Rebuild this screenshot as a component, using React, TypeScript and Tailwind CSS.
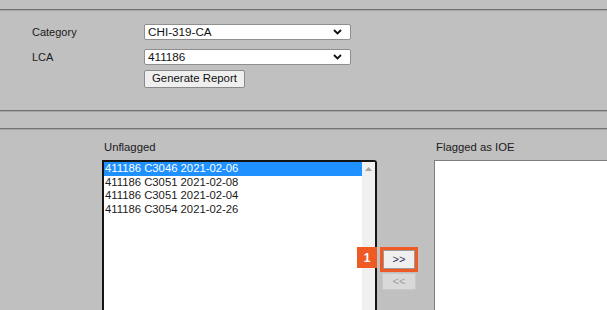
import React from "react";

const rows = [
  "411186 C3046 2021-02-06",
  "411186 C3051 2021-02-08",
  "411186 C3051 2021-02-04",
  "411186 C3054 2021-02-26",
];

function Chevron() {
  return (
    <svg width="9" height="6" viewBox="0 0 9 6" className="shrink-0">
      <path d="M1 1 L4.5 4.5 L8 1" fill="none" stroke="#111" strokeWidth="1.8" />
    </svg>
  );
}

function FakeSelect({ value }: { value: string }) {
  return (
    <div className="flex h-[16px] w-[207px] items-center justify-between rounded-[2px] border border-[#8f8f8f] bg-white pl-[3px] pr-[8px] text-[11.7px] leading-none text-[#111]">
      <span>{value}</span>
      <Chevron />
    </div>
  );
}

function Rule() {
  return (
    <div className="flex flex-col">
      <div className="h-px bg-[#737373]" />
      <div className="h-px bg-[#a5a5a5]" />
    </div>
  );
}

export default function App() {
  return (
    <div className="relative h-[310px] w-[607px] overflow-hidden bg-[#c0c0c0] font-['Liberation_Sans',Arial,sans-serif] text-[#1a1a1a]">
      <div className="h-[9px]" />
      <Rule />

      {/* report form */}
      <div className="grid h-[99px] grid-cols-[112px_auto] content-start gap-x-0 pl-[32px] pt-[13px]">
        <div className="flex h-[16px] items-center text-[11px]">Category</div>
        <FakeSelect value="CHI-319-CA" />
        <div className="mt-[9px] flex h-[16px] items-center text-[11px]">LCA</div>
        <div className="mt-[9px]">
          <FakeSelect value="411186" />
        </div>
        <div />
        <div className="mt-[5px]">
          <button className="flex h-[18px] items-center rounded-[2px] border border-[#8a8a8a] bg-[#efefef] px-[7px] text-[11.4px] leading-none text-[#111]">
            Generate Report
          </button>
        </div>
      </div>

      <Rule />
      <div className="h-[16px]" />
      <Rule />

      {/* flag lists */}
      <div className="flex pl-[102px] pt-[10px]">
        <div className="flex w-[275px] flex-col">
          <div className="h-[20px] pl-[2px] text-[11.3px] leading-[14px]">Unflagged</div>
          <div className="flex h-[160px] rounded-tr-[3px] border-2 border-[#141414] bg-white">
            <div className="flex flex-1 flex-col text-[11.3px] leading-[13.7px]">
              {rows.map((r, i) => (
                <div
                  key={r}
                  className={i === 0 ? "bg-[#1e90ff] pl-[1px] text-white" : "pl-[1px] text-[#1a1a1a]"}
                >
                  {r}
                </div>
              ))}
            </div>
            <div className="flex w-[13px] justify-center bg-[#f0f0f0] pt-[5px]">
              <svg width="7" height="4" viewBox="0 0 7 4">
                <path d="M0 4 L3.5 0 L7 4 Z" fill="#a3a3a3" />
              </svg>
            </div>
          </div>
        </div>

        <div className="ml-[2px] flex w-[40px] flex-col items-center pt-[107px]">
          <div className="border-[3px] border-[#ef5a24]">
            <button className="flex h-[19px] w-[32px] items-center justify-center border border-[#9a9a9a] bg-[#efefef] text-[11px] leading-none text-[#2a2f55]">
              &gt;&gt;
            </button>
          </div>
          <button className="mt-[1px] flex h-[17px] w-[34px] items-center justify-center border border-[#c8c8c8] bg-[#d9d9d9] text-[11px] leading-none text-[#9e9e9e]">
            &lt;&lt;
          </button>
        </div>

        <div className="ml-[15px] flex flex-1 flex-col">
          <div className="h-[20px] pl-[2px] text-[11.3px] leading-[14px]">Flagged as IOE</div>
          <div className="h-[160px] border border-r-0 border-[#7e7e7e] bg-white" />
        </div>
      </div>

      {/* step callout */}
      <div className="absolute left-[357px] top-[247px] flex h-[21px] w-[20px] items-center justify-center bg-[#ef5a24] text-[12px] font-bold text-white">
        1
      </div>
    </div>
  );
}
